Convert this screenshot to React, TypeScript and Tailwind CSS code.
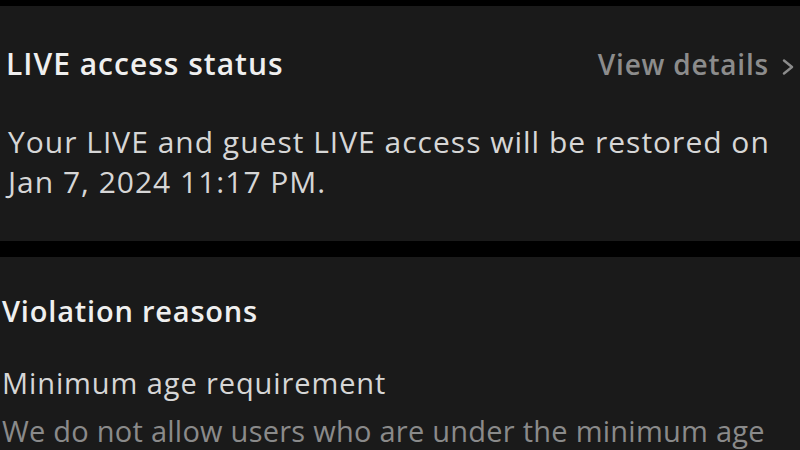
export default function App() {
  return (
    <main
      className="h-[450px] w-[800px] overflow-hidden bg-black"
      style={{ fontFamily: "'Open Sans', Lato, sans-serif" }}
    >
      <div className="h-[6px]" />
      <section className="h-[235px] bg-[#1a1a1a] pl-[6px] pr-[6px]">
        <div className="flex items-center justify-between pt-[38px]">
          <h2 className="text-[30px] leading-[40px] tracking-[1px] font-semibold text-[#efefef]">LIVE access status</h2>
          <button type="button" className="flex items-center gap-[13px] text-[28px] leading-[40px] tracking-[0.8px] font-semibold text-[#8c8c8c]">
            View details
            <svg viewBox="0 0 12 16" className="mt-[5px] h-[16px] w-[12px]" fill="none" stroke="currentColor" strokeWidth={2.4} strokeLinecap="round" strokeLinejoin="round">
              <polyline points="2,1.5 10,8 2,14.5" />
            </svg>
          </button>
        </div>
        <p className="mt-[38px] pl-[2px] text-[30px] leading-[40px] tracking-[1px] text-[#d6d6d6]">
          Your LIVE and guest LIVE access will be restored on
          <br />
          Jan 7, 2024 11:17 PM.
        </p>
      </section>
      <div className="h-[16px]" />
      <section className="bg-[#1a1a1a] pl-[2px]">
        <h2 className="pt-[34px] text-[29px] leading-[40px] tracking-[0.8px] font-semibold text-[#efefef]">Violation reasons</h2>
        <p className="mt-[32px] text-[29px] leading-[40px] tracking-[0.9px] text-[#d6d6d6]">Minimum age requirement</p>
        <p className="mt-[8px] text-[29px] leading-[40px] tracking-[0.25px] text-[#8a8a8a]">
          We do not allow users who are under the minimum age
        </p>
      </section>
    </main>
  );
}
